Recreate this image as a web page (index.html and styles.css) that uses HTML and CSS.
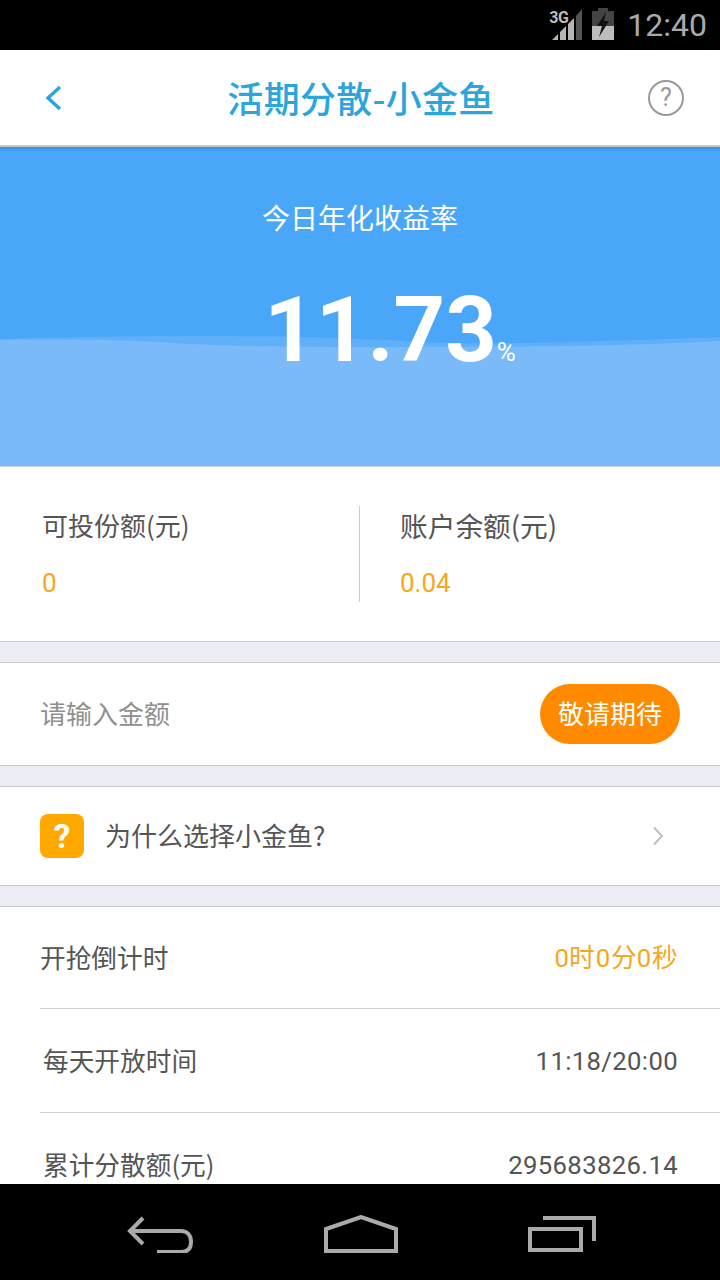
FILE: index.html
```html
<!DOCTYPE html>
<html lang="zh-CN">
<head>
<meta charset="UTF-8" />
<meta name="viewport" content="width=device-width, initial-scale=1" />
<title>活期分散-小金鱼</title>
<link rel="stylesheet" href="styles.css">
</head>
<body>

<div class="status-bar">
  <span class="net">3G</span>
  <svg class="signal" width="34" height="34" viewBox="0 0 34 34">
    <path d="M0 34 L6 28 V34 Z M8 34 V26 L14 20 V34 Z M16 34 V18 L22 12 V34 Z" fill="#b5b5b5"/>
    <path d="M24 34 V10 L30 3 V34 Z" fill="#555"/>
  </svg>
  <svg class="battery" width="22" height="32" viewBox="0 0 22 32">
    <path d="M6 0 H16 V3 H22 V32 H0 V3 H6 Z" fill="#444"/>
    <path d="M0 18 H22 V32 H0 Z" fill="#bdbdbd"/>
    <path d="M14 4 L5 18 H10 L7 29 L17 13 H12 Z" fill="#111"/>
  </svg>
  <span class="clock">12:40</span>
</div>

<header class="top-bar">
  <svg class="back" width="18" height="26" viewBox="0 0 18 26">
    <path d="M15 2 L3 13 L15 24" fill="none" stroke="#2ba5dc" stroke-width="3.4"/>
  </svg>
  <h1>活期分散-小金鱼</h1>
  <span class="help">?</span>
</header>

<main class="content">
  <section class="hero">
    <svg class="wave" width="720" height="130" viewBox="0 0 720 130">
      <path d="M0 3 C60 1 120 0 190 0 C280 0 350 2 420 6 C480 9 560 7 720 1 V130 H0 Z" fill="#5faff9"/>
      <path d="M0 4 C50 3 110 3 160 6 C210 10 280 11 380 11 C470 11 620 11 720 5 V130 H0 Z" fill="#7bbaf8"/>
    </svg>
    <p class="hero-label">今日年化收益率</p>
    <p class="rate">11.73<span class="pct">%</span></p>
  </section>

  <section class="stats">
    <div class="stat">
      <p class="stat-label">可投份额(元)</p>
      <p class="stat-value">0</p>
    </div>
    <div class="stat stat-right">
      <p class="stat-label">账户余额(元)</p>
      <p class="stat-value">0.04</p>
    </div>
  </section>

  <section class="amount">
    <span class="placeholder">请输入金额</span>
    <button type="button" class="soon">敬请期待</button>
  </section>

  <section class="why">
    <span class="why-icon">?</span>
    <span class="why-text">为什么选择小金鱼?</span>
    <svg class="arrow" width="12" height="20" viewBox="0 0 12 20">
      <path d="M2 1.5 L10 10 L2 18.5" fill="none" stroke="#c2c2c2" stroke-width="2.2"/>
    </svg>
  </section>

  <section class="info">
    <div class="info-row first">
      <span>开抢倒计时</span>
      <span class="orange">0时0分0秒</span>
    </div>
    <div class="info-row second">
      <span>每天开放时间</span>
      <span>11:18/20:00</span>
    </div>
    <div class="info-row third">
      <span>累计分散额(元)</span>
      <span>295683826.14</span>
    </div>
  </section>
</main>

<nav class="nav-bar">
  <svg width="68" height="38" viewBox="0 0 68 38">
    <path d="M31 37 H55 C62 37 65 33 65 27 C65 20 61 16 55 16 H5 M17 3 L4 16 L17 29" fill="none" stroke="#aaa" stroke-width="4"/>
  </svg>
  <svg width="74" height="38" viewBox="0 0 74 38">
    <path d="M2 36 V14 L37 2 L72 14 V36 Z" fill="none" stroke="#aaa" stroke-width="4"/>
  </svg>
  <svg width="70" height="36" viewBox="0 0 70 36">
    <path d="M3 13 H54 V34 H3 Z" fill="none" stroke="#aaa" stroke-width="4"/>
    <path d="M16 2 H67 V25" fill="none" stroke="#aaa" stroke-width="4"/>
  </svg>
</nav>

</body>
</html>
```

FILE: styles.css
```css
* {
  box-sizing: border-box;
}
html, body {
  margin: 0;
  height: 1280px;
  overflow: hidden;
}
body {
  display: flex;
  flex-direction: column;
  font-family: "Noto Sans CJK SC", Roboto, sans-serif;
  background: #fff;
  color: #555;
}
p, h1 {
  margin: 0;
}

.status-bar {
  height: 50px;
  flex: none;
  background: #000;
  display: flex;
  align-items: center;
  padding: 0 13px 0 0;
  justify-content: flex-end;
}
.net {
  font: bold 16px Roboto, sans-serif;
  letter-spacing: -0.5px;
  color: #bbb;
  align-self: flex-start;
  margin: 8px -16px 0 0;
}
.signal {
  margin: 0 6px 4px 0;
}
.battery {
  margin: 0 13px 2px 0;
}
.clock {
  font: 32px Roboto, sans-serif;
  color: #aaa;
}

.top-bar {
  height: 97px;
  flex: none;
  display: flex;
  align-items: center;
  justify-content: space-between;
  padding: 0 36px 0 45px;
  background: #fff;
  border-bottom: 2px solid #c8c8c8;
}
.top-bar h1 {
  font-size: 36px;
  font-weight: 500;
  letter-spacing: 0.3px;
  color: #2ba5dc;
  margin: 0 0 2px 11px;
}
.help {
  width: 36px;
  height: 36px;
  border: 2px solid #999;
  border-radius: 50%;
  display: flex;
  align-items: center;
  justify-content: center;
  font: 25px Roboto, sans-serif;
  color: #999;
}

.content {
  flex: 1;
  min-height: 0;
  overflow: hidden;
  background: #ecedf5;
}

.hero {
  height: 320px;
  position: relative;
  background: linear-gradient(#3c92e2, #4aa6f8 5px);
  border-bottom: 1px solid #c9d3dc;
  color: #fff;
  text-align: center;
  overflow: hidden;
}
.wave {
  position: absolute;
  left: 0;
  bottom: 0;
}
.hero-label {
  position: relative;
  padding-top: 50px;
  font-size: 28px;
  line-height: 40px;
}
.rate {
  position: relative;
  margin-top: 41px;
  font: bold 90px/106px Roboto, sans-serif;
  padding-left: 60px;
}
.pct {
  font-size: 26px;
  font-weight: 400;
}

.stats {
  height: 175px;
  display: flex;
  align-items: center;
  background: #fff;
  border-bottom: 1px solid #c9c9d1;
}
.stat {
  width: 360px;
  height: 96px;
  padding: 0 0 0 42px;
}
.stat-right {
  width: 361px;
  margin-left: -1px;
  border-left: 1px solid #c9c9d1;
  padding-left: 40px;
}
.stat-label {
  font-size: 26px;
  line-height: 38px;
}
.stat-right .stat-label {
  font-size: 27.7px;
}
.stat-value {
  margin-top: 24px;
  font: 26px/30px Roboto, sans-serif;
  color: #f5a81c;
}

.amount {
  height: 104px;
  margin-top: 20px;
  display: flex;
  align-items: center;
  justify-content: space-between;
  padding: 0 40px 0 40px;
  background: #fff;
  border-top: 1px solid #c9c9d1;
  border-bottom: 1px solid #c9c9d1;
}
.placeholder {
  font-size: 26px;
  line-height: 38px;
  margin-bottom: 3px;
  color: #8f8f8f;
}
.soon {
  width: 140px;
  height: 60px;
  border: none;
  border-radius: 30px;
  background: #ff8a00;
  color: #fff;
  font-family: inherit;
  font-size: 26px;
  line-height: 38px;
  padding: 0 0 2px;
}

.why {
  height: 100px;
  margin-top: 20px;
  display: flex;
  align-items: center;
  padding: 0 56px 0 40px;
  background: #fff;
  border-top: 1px solid #c9c9d1;
  border-bottom: 1px solid #c9c9d1;
}
.why-icon {
  width: 44px;
  height: 44px;
  border-radius: 8px;
  background: #ffa800;
  color: #fff;
  display: flex;
  align-items: center;
  justify-content: center;
  font: bold 34px Roboto, sans-serif;
}
.why-text {
  flex: 1;
  margin: 0 0 2px 21px;
  font-size: 26px;
  line-height: 38px;
}

.info {
  margin-top: 20px;
  padding-left: 40px;
  background: #fff;
  border-top: 1px solid #c9c9d1;
  font-size: 25.7px;
  line-height: 38px;
  height: 300px;
}
.info-row {
  display: flex;
  align-items: center;
  justify-content: space-between;
  padding-right: 42px;
  border-bottom: 1px solid #cfcfcf;
}
.info-row span {
  margin-bottom: 2px;
}
.info-row span:last-child {
  margin-bottom: 0;
  font-family: Roboto, sans-serif;
  letter-spacing: 0.35px;
}
.info-row .orange {
  font-family: inherit;
  letter-spacing: 0;
  color: #f5a81c;
}
.first {
  height: 102px;
}
.second {
  height: 104px;
  padding-left: 3px;
}
.third {
  height: 104px;
  padding-left: 3px;
  border-bottom: none;
}

.nav-bar {
  height: 96px;
  flex: none;
  background: #000;
  display: flex;
  align-items: center;
  justify-content: space-between;
  padding: 4px 123px 0 126px;
}
```
